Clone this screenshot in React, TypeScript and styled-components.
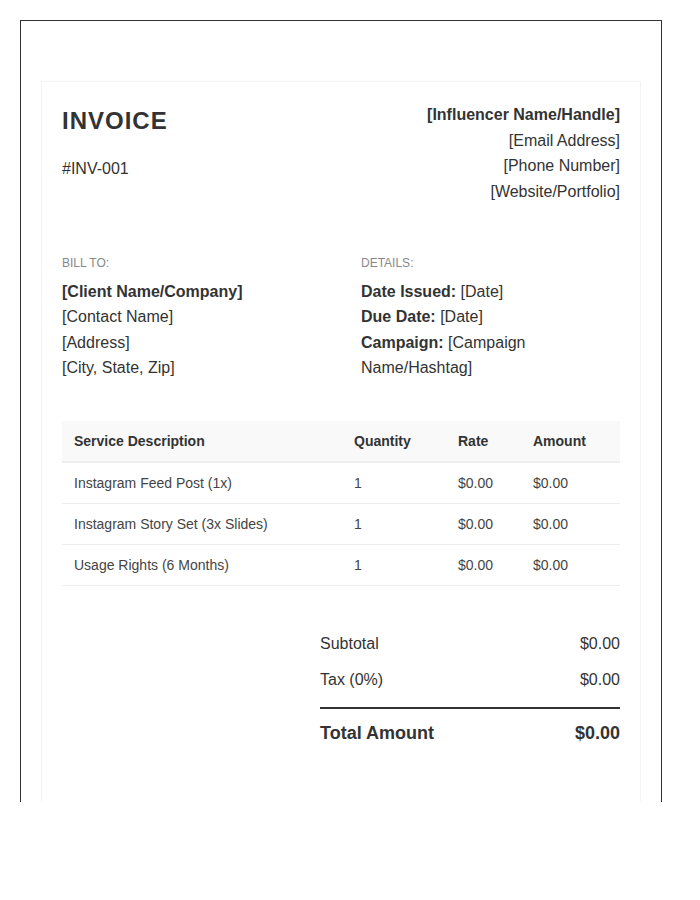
import React from "react";
import styled, { createGlobalStyle } from "styled-components";

const Global = createGlobalStyle`
  html, body { margin: 0; padding: 0; background: #fff; }
  body { font-family: "Liberation Sans", Arial, sans-serif; color: #333; font-size: 16px; line-height: 1.6; }
`;
const Frame = styled.div`
  box-sizing: border-box; width: 642px; height: 782px; margin: 20px 0 0 20px;
  padding: 60px 20px 0; border: 1px solid #333; border-bottom: 0; overflow: hidden;
`;
const Card = styled.div`
  box-sizing: border-box; width: 600px; min-height: 800px; padding: 20px; border: 1px solid #f3f3f3;
`;
const Header = styled.header`
  display: flex; justify-content: space-between; align-items: flex-start; margin-bottom: 50px;
`;
const Title = styled.h1`
  margin: 0 0 16px; font-size: 24px; line-height: 1.6; font-weight: 700; letter-spacing: 1px; color: #333;
`;
const Sender = styled.div` text-align: right; `;
const Parties = styled.section`
  display: grid; grid-template-columns: 1fr 1fr; gap: 40px; margin-bottom: 40px;
`;
const Label = styled.div`
  font-size: 12px; line-height: 1.6; color: #888; text-transform: uppercase; margin-bottom: 5px;
`;
const Table = styled.table`
  width: 100%; border-collapse: collapse; table-layout: fixed; margin-bottom: 40px; font-size: 14px;
`;
const Th = styled.th<{ $w?: number }>`
  box-sizing: border-box;
  ${p => p.$w ? `width: ${p.$w}px;` : ""}
  padding: 12px; text-align: left; background: #f9f9f9; border-bottom: 2px solid #eee;
  font-weight: 700; line-height: 16px; color: #333;
`;
const Td = styled.td`
  padding: 12px; border-bottom: 1px solid #eee; line-height: 16px; color: #444;
`;
const Totals = styled.section`
  width: 300px; margin-left: auto;
`;
const TotalRow = styled.div`
  display: flex; justify-content: space-between; padding: 5px 0; line-height: 26px;
`;
const GrandRow = styled.div`
  display: flex; justify-content: space-between; margin-top: 9px; padding: 10px 0 0;
  border-top: 2px solid #333; font-size: 18px; font-weight: 700; line-height: 29px;
`;

const rows = [
  ["Instagram Feed Post (1x)", "1", "$0.00", "$0.00"],
  ["Instagram Story Set (3x Slides)", "1", "$0.00", "$0.00"],
  ["Usage Rights (6 Months)", "1", "$0.00", "$0.00"],
];

export default function App() {
  return (
    <>
      <Global />
      <Frame>
        <Card>
          <Header>
            <div>
              <Title>INVOICE</Title>
              <div>#INV-001</div>
            </div>
            <Sender>
              <strong>[Influencer Name/Handle]</strong><br />
              [Email Address]<br />
              [Phone Number]<br />
              [Website/Portfolio]
            </Sender>
          </Header>
          <Parties>
            <div>
              <Label>Bill To:</Label>
              <strong>[Client Name/Company]</strong><br />
              [Contact Name]<br />
              [Address]<br />
              [City, State, Zip]
            </div>
            <div>
              <Label>Details:</Label>
              <strong>Date Issued:</strong> [Date]<br />
              <strong>Due Date:</strong> [Date]<br />
              <strong>Campaign:</strong> [Campaign Name/Hashtag]
            </div>
          </Parties>
          <Table>
            <thead>
              <tr>
                <Th>Service Description</Th>
                <Th $w={104}>Quantity</Th>
                <Th $w={75}>Rate</Th>
                <Th $w={99}>Amount</Th>
              </tr>
            </thead>
            <tbody>
              {rows.map(r => (
                <tr key={r[0]}>{r.map((c, i) => <Td key={i}>{c}</Td>)}</tr>
              ))}
            </tbody>
          </Table>
          <Totals>
            <TotalRow><span>Subtotal</span><span>$0.00</span></TotalRow>
            <TotalRow><span>Tax (0%)</span><span>$0.00</span></TotalRow>
            <GrandRow><span>Total Amount</span><span>$0.00</span></GrandRow>
          </Totals>
        </Card>
      </Frame>
    </>
  );
}
